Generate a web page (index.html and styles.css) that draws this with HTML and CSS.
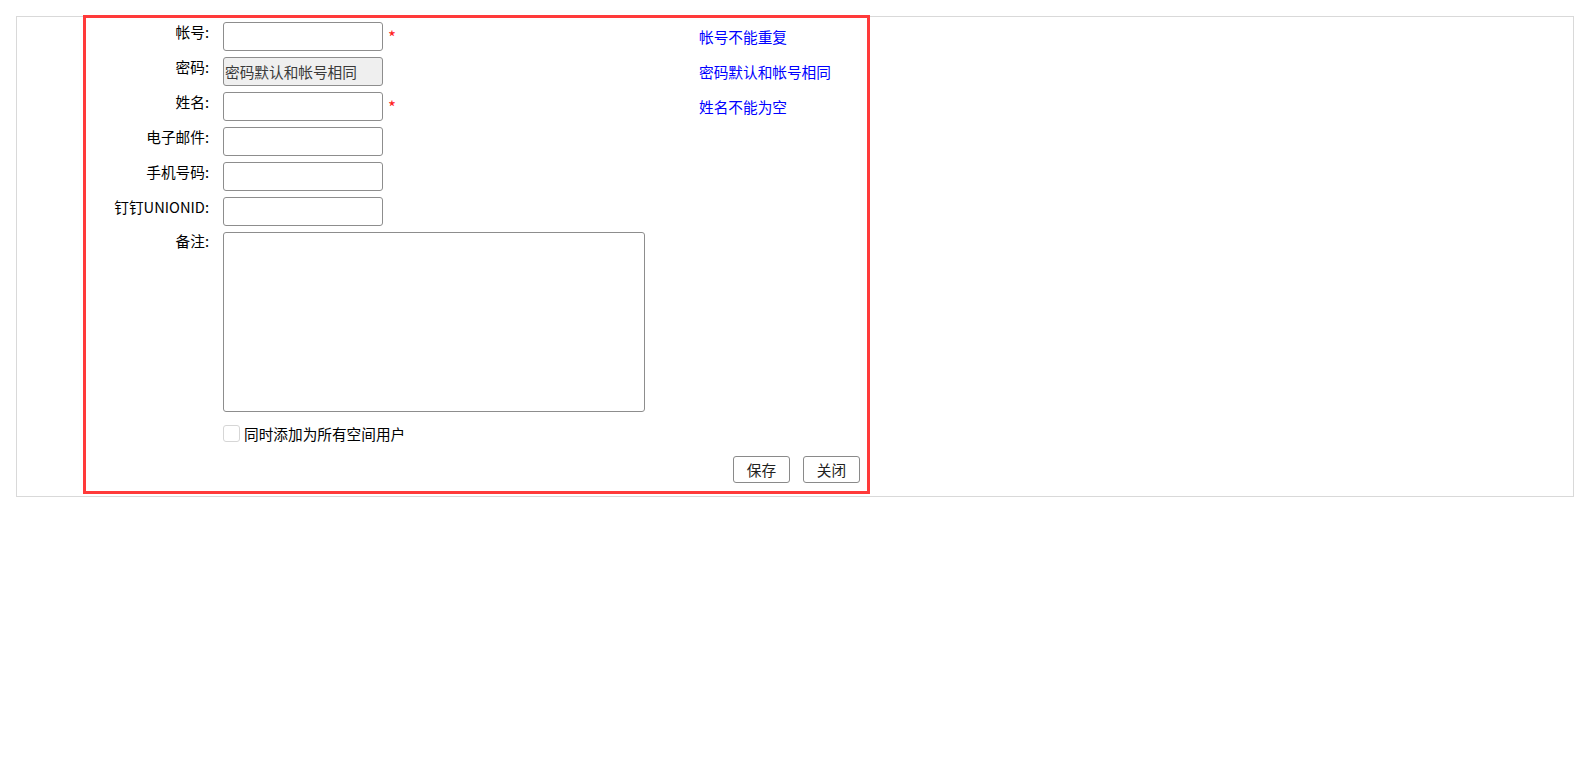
FILE: index.html
```html
<!DOCTYPE html>
<html lang="zh-CN">
<head>
<meta charset="utf-8">
<title>用户</title>
<link rel="stylesheet" href="styles.css">
</head>
<body>
<div class="page">
  <div class="panel">
    <form class="user-form">
      <div class="fields">
        <label class="lbl">帐号:</label>
        <div class="ctl"><input class="txt" type="text"><span class="req">*</span></div>
        <div class="hint">帐号不能重复</div>

        <label class="lbl">密码:</label>
        <div class="ctl"><input class="txt txt-disabled" type="text" value="密码默认和帐号相同" disabled></div>
        <div class="hint">密码默认和帐号相同</div>

        <label class="lbl">姓名:</label>
        <div class="ctl"><input class="txt" type="text"><span class="req">*</span></div>
        <div class="hint">姓名不能为空</div>

        <label class="lbl">电子邮件:</label>
        <div class="ctl"><input class="txt" type="text"></div>
        <div class="hint"></div>

        <label class="lbl">手机号码:</label>
        <div class="ctl"><input class="txt" type="text"></div>
        <div class="hint"></div>

        <label class="lbl">钉钉UNIONID:</label>
        <div class="ctl"><input class="txt" type="text"></div>
        <div class="hint"></div>

        <label class="lbl lbl-area">备注:</label>
        <div class="ctl ctl-area"><textarea class="area"></textarea></div>
        <div class="hint"></div>
      </div>
      <div class="chk-row">
        <span class="chk"></span><span class="chk-text">同时添加为所有空间用户</span>
      </div>
      <div class="actions">
        <button type="button" class="btn">保存</button>
        <button type="button" class="btn">关闭</button>
      </div>
    </form>
  </div>
</div>
</body>
</html>
```
FILE: styles.css
```css
* { box-sizing: border-box; }
html, body { margin: 0; padding: 0; background: #fff; }
body {
  font-family: "Noto Sans CJK SC", "Noto Sans", sans-serif;
  font-size: 14.67px;
  line-height: 20px;
  color: #000;
}
.page { padding: 16px 0 0 16px; }
.panel {
  width: 1558px;
  border: 1px solid #d9d9d9;
  padding: 1px 0 5px 69px;
}
.user-form {
  width: 781px;
  outline: 3px solid #ff3a3a;
  padding: 4px 7px 8px 0;
}
.fields {
  display: grid;
  grid-template-columns: 137px 476px 1fr;
  grid-template-rows: repeat(6, 29px) 180px;
  row-gap: 6px;
}
.lbl {
  text-align: right;
  padding-right: 14px;
  white-space: nowrap;
}
.lbl-area { margin-top: -1px; }
.ctl { display: flex; align-items: center; }
.ctl-area { align-items: flex-start; }
.txt {
  width: 160px;
  height: 29px;
  border: 1px solid #8d8d8d;
  border-radius: 3px;
  background: #fff;
  font: inherit;
  padding: 0 2px;
  margin: 0;
}
.txt-disabled {
  background: #efefef;
  color: #3a3a3a;
  padding-left: 1px;
}
.req {
  color: #ff2020;
  margin-left: 5px;
  font-size: 17px;
  line-height: 20px;
  align-self: flex-start;
  padding-top: 5px;
}
.hint { color: #0000ff; padding-top: 5px; white-space: nowrap; }
.area {
  width: 422px;
  height: 180px;
  border: 1px solid #8d8d8d;
  border-radius: 3px;
  resize: none;
  margin: 0;
  font: inherit;
}
.chk-row {
  display: flex;
  align-items: center;
  margin-top: 13px;
  padding-left: 137px;
  height: 17px;
}
.chk {
  width: 17px;
  height: 17px;
  border: 1px solid #d6d6d6;
  border-radius: 3px;
  background: #fff;
  margin-right: 4px;
}
.chk-text { color: #000; }
.actions {
  display: flex;
  justify-content: flex-end;
  gap: 13px;
  margin-top: 14px;
}
.btn {
  width: 57px;
  height: 27px;
  border: 1px solid #8a8a8a;
  border-radius: 3px;
  background: #fff;
  font: inherit;
  color: #222;
  padding: 0;
  margin: 0;
}
```
